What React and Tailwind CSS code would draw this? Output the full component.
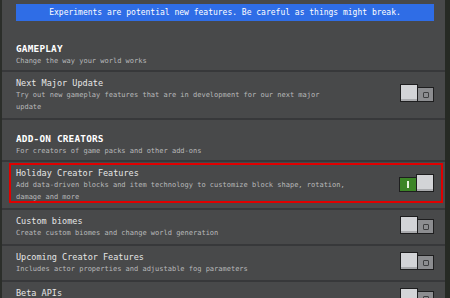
import React from 'react';

const FONT = { fontFamily: '"DejaVu Sans Mono", "Liberation Mono", monospace' };

function Toggle({ on }) {
  if (on) {
    return (
      <div className="flex items-end flex-shrink-0">
        <div className="w-[17px] h-[15px] border border-r-0 border-[#1e1e1f] bg-[#3c8527] flex items-center justify-center">
          <div className="w-[2px] h-[7px] bg-[#e8f5e0]" />
        </div>
        <div className="w-[18px] h-[18px] border border-[#1e1e1f] bg-[#d3d4d7] shadow-[inset_0_-2px_0_#a9aaad]" />
      </div>
    );
  }
  return (
    <div className="flex items-end flex-shrink-0">
      <div className="w-[18px] h-[18px] border border-[#1e1e1f] bg-[#d3d4d7] shadow-[inset_0_-2px_0_#a9aaad]" />
      <div className="w-[16px] h-[15px] border border-l-0 border-[#1e1e1f] bg-[#8c8d90] flex items-center justify-center">
        <div className="w-[6px] h-[6px] border border-[#3e3f41] rounded-[1px]" />
      </div>
    </div>
  );
}

function Separator() {
  return <div className="h-[2px] flex-none bg-[#37383a]" />;
}

function Section({ title, subtitle, pt }) {
  return (
    <div className={`flex-none pl-[14px] pr-[11px] pb-[3px] ${pt}`}>
      <div className="text-[9.4px]/[12px] h-[12px] font-bold text-white tracking-[0.2px]">{title}</div>
      <div className="text-[7px]/[12px] h-[12px] text-[#b8b9ba]">{subtitle}</div>
    </div>
  );
}

function Row({ title, desc, on, highlight }) {
  return (
    <div className="relative flex-none flex items-center pl-[14px] pr-[11px] pt-[5px] pb-[5px]">
      {highlight && (
        <div className="absolute top-[1px] bottom-[5px] left-[7px] right-[2px] border-2 border-[#e00000]" />
      )}
      <div className="w-[331px] flex-none">
        <div className="text-[8.5px]/[12px] h-[12px] text-[#e6e6e6]">{title}</div>
        <div className="text-[7px]/[12px] text-[#b8b9ba]">{desc}</div>
      </div>
      <div className="ml-auto -mt-[4px]">
        <Toggle on={on} />
      </div>
    </div>
  );
}

export default function App() {
  return (
    <div className="w-[450px] h-[298px] overflow-hidden flex bg-[#2a2d29]" style={FONT}>
      <div className="w-[2px] bg-[#2b2e2a]" />
      <div className="w-[443px] h-[298px] overflow-hidden bg-[#48494a] flex flex-col">
        <div className="flex-none ml-[14px] mr-[11px] mt-[4px] h-[17px] bg-[#2f6de6] flex items-center justify-center">
          <span className="text-[8px] leading-none text-white">
            Experiments are potential new features. Be careful as things might break.
          </span>
        </div>
        <Section title="GAMEPLAY" subtitle="Change the way your world works" pt="pt-[22px]" />
        <Separator />
        <Row
          title="Next Major Update"
          desc="Try out new gameplay features that are in development for our next major update"
          on={false}
        />
        <Separator />
        <Section
          title="ADD-ON CREATORS"
          subtitle="For creators of game packs and other add-ons"
          pt="pt-[13px]"
        />
        <Separator />
        <Row
          title="Holiday Creator Features"
          desc="Add data-driven blocks and item technology to customize block shape, rotation, damage and more"
          on={true}
          highlight
        />
        <Separator />
        <Row title="Custom biomes" desc="Create custom biomes and change world generation" on={false} />
        <Separator />
        <Row
          title="Upcoming Creator Features"
          desc="Includes actor properties and adjustable fog parameters"
          on={false}
        />
        <Separator />
        <Row title="Beta APIs" desc="Use experimental APIs in scripting" on={false} />
      </div>
      <div className="flex-1 bg-[#262a24]" />
    </div>
  );
}
